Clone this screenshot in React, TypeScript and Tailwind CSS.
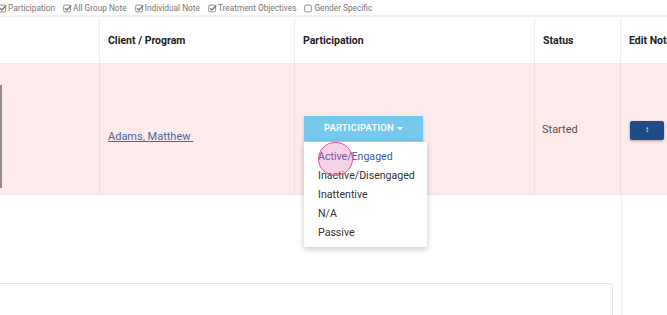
import React from 'react';

const filters = [
  { label: 'Participation', checked: true },
  { label: 'All Group Note', checked: true },
  { label: 'Individual Note', checked: true },
  { label: 'Treatment Objectives', checked: true },
  { label: 'Gender Specific', checked: false },
];

const options = ['Active/Engaged', 'Inactive/Disengaged', 'Inattentive', 'N/A', 'Passive'];

function CheckIcon({ checked }: { checked: boolean }) {
  return (
    <svg width="9" height="9" viewBox="0 0 10 10" className="shrink-0">
      <rect x="0.75" y="1.25" width="7.5" height="7.5" rx="1.2" fill="none" stroke="#888" strokeWidth="1" />
      {checked && <path d="M2.4 4.8 L4.3 6.7 L9.2 1.6" fill="none" stroke="#777" strokeWidth="1.4" />}
    </svg>
  );
}

export default function App() {
  return (
    <div className="w-[667px] h-[315px] overflow-hidden bg-white text-[#333]" style={{ fontFamily: 'Roboto, "Noto Sans", sans-serif' }}>
      {/* filter bar */}
      <div className="h-[17px] flex items-center pt-[1px] gap-[8px] text-[8.3px] text-[#777] border-b-2 border-[#f1f1f1] -ml-[2px] whitespace-nowrap">
        {filters.map((f) => (
          <span key={f.label} className="flex items-center gap-[1px]">
            <CheckIcon checked={f.checked} />
            {f.label}
          </span>
        ))}
      </div>

      {/* header */}
      <div className="flex h-[47px] pt-[2px] border-b border-[#ececec] text-[10.5px] font-bold text-[#222] whitespace-nowrap">
        <div className="w-[100px] shrink-0 border-r border-[#ececec]" />
        <div className="w-[195px] shrink-0 border-r border-[#ececec] flex items-center pl-[8px]">Client / Program</div>
        <div className="w-[240px] shrink-0 border-r border-[#ececec] flex items-center pl-[8px]">Participation</div>
        <div className="w-[86px] shrink-0 border-r border-[#ececec] flex items-center pl-[8px]">Status</div>
        <div className="w-[80px] shrink-0 flex items-center pl-[8px]">Edit Notes</div>
      </div>

      {/* data row */}
      <div className="flex h-[131px] bg-[#fdeaea] border-b border-[#e6e6e6] text-[11px]">
        <div className="w-[100px] shrink-0 border-r border-[#f0dede] pt-[21px]">
          <div className="w-[2px] h-[103px] bg-[#8c8c8c]" />
        </div>
        <div className="w-[195px] shrink-0 border-r border-[#f0dede] flex items-center pl-[8px] pt-[17px]">
          <a className="underline text-[#4a66a6] whitespace-pre">Adams, Matthew </a>
        </div>
        <div className="w-[240px] shrink-0 border-r border-[#f0dede] pl-[9px] pt-[52px]">
          <div className="relative w-[119px]">
            <button className="w-[119px] h-[25px] bg-[#74c9ec] text-white text-[9.5px] font-medium tracking-[0.2px] shadow-[0_2px_3px_rgba(0,0,0,0.2)] flex items-center justify-center gap-[3px]">
              PARTICIPATION
              <svg width="6" height="4" viewBox="0 0 6 4"><path d="M0 0 H6 L3 3.5 Z" fill="white" /></svg>
            </button>
            <div className="absolute left-0 top-[26px] w-[123px] bg-white shadow-[0_2px_6px_rgba(0,0,0,0.22)] pt-[5px] pb-[5px] z-10">
              {options.map((o, i) => (
                <div key={o} className={`h-[19px] flex items-center pl-[14px] text-[10.6px] ${i === 0 ? 'text-[#3d5a9e]' : 'text-[#333]'}`}>
                  {o}
                </div>
              ))}
              <div className="absolute left-[14px] top-[0px] w-[35px] h-[34px] rounded-full bg-[rgba(228,90,165,0.28)] border border-[#d5569c]" />
            </div>
          </div>
        </div>
        <div className="w-[86px] shrink-0 border-r border-[#f0dede] flex items-center pl-[7px] pt-[2px] text-[#555]">Started</div>
        <div className="w-[80px] shrink-0 flex items-center pl-[9px] pt-[2px]">
          <button className="w-[34px] h-[19px] bg-[#1f4c88] rounded-[2px] shadow-[0_1px_3px_rgba(0,0,0,0.35)] flex items-center justify-center text-white text-[8px] leading-none">
            ↕
          </button>
        </div>
      </div>

      {/* below */}
      <div className="flex h-[200px]">
        <div className="w-[622px] shrink-0 border-r border-[#ececec] pt-[88px]">
          <div className="-ml-px w-[614px] h-[60px] border border-[#e3e3e3] rounded-tr-[4px]" />
        </div>
      </div>
    </div>
  );
}
